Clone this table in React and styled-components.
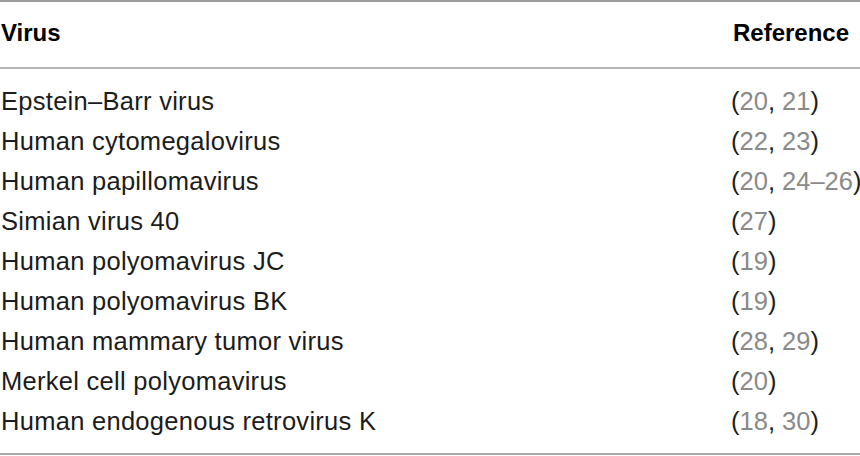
import React from 'react'
import styled, { createGlobalStyle } from 'styled-components'

const rows = [
    { virus: 'Epstein–Barr virus', refs: ['20', '21'] },
    { virus: 'Human cytomegalovirus', refs: ['22', '23'] },
    { virus: 'Human papillomavirus', refs: ['20', '24–26'] },
    { virus: 'Simian virus 40', refs: ['27'] },
    { virus: 'Human polyomavirus JC', refs: ['19'] },
    { virus: 'Human polyomavirus BK', refs: ['19'] },
    { virus: 'Human mammary tumor virus', refs: ['28', '29'] },
    { virus: 'Merkel cell polyomavirus', refs: ['20'] },
    { virus: 'Human endogenous retrovirus K', refs: ['18', '30'] },
]

function App() {
    return (
        <>
            <GlobalStyle />
            <Table>
                <Head>
                    <HeadCell>Virus</HeadCell>
                    <HeadCell>Reference</HeadCell>
                </Head>
                <Body>
                    {rows.map((row) => (
                        <Row key={row.virus}>
                            <Cell spaced>{row.virus}</Cell>
                            <Cell>
                                (
                                {row.refs.map((ref, i) => (
                                    <React.Fragment key={ref}>
                                        {i > 0 && ', '}
                                        <Cite>{ref}</Cite>
                                    </React.Fragment>
                                ))}
                                )
                            </Cell>
                        </Row>
                    ))}
                </Body>
            </Table>
        </>
    )
}

export default App

const GlobalStyle = createGlobalStyle`
    body{
        margin: 0;
        background: #fff;
        font-family: "Liberation Sans", Arial, sans-serif;
    }
`

const Table = styled.div`
    width: 860px;
    height: 456px;
    border-top: 2px solid #9c9c9c;
    box-sizing: border-box;
`

const Head = styled.div`
    display: grid;
    grid-template-columns: 1fr 127px;
    height: 67px;
    padding: 11px 0 0 1px;
    box-sizing: border-box;
    border-bottom: 2px solid #b4b4b4;
`

const HeadCell = styled.div`
    font-size: 24px;
    font-weight: 700;
    line-height: 40px;
    color: #000;
    white-space: nowrap;
`

const Body = styled.div`
    padding: 12px 0 12px 1px;
    border-bottom: 2px solid #a8a8a8;
`

const Row = styled.div`
    display: grid;
    grid-template-columns: 1fr 129px;
    height: 40px;
`

const Cell = styled.div`
    font-size: 25.5px;
    line-height: 40px;
    letter-spacing: ${props => props.spaced ? '0.28px' : '0'};
    color: #1c1c1c;
    white-space: nowrap;
`

const Cite = styled.span`
    color: #8a8a8a;
`
